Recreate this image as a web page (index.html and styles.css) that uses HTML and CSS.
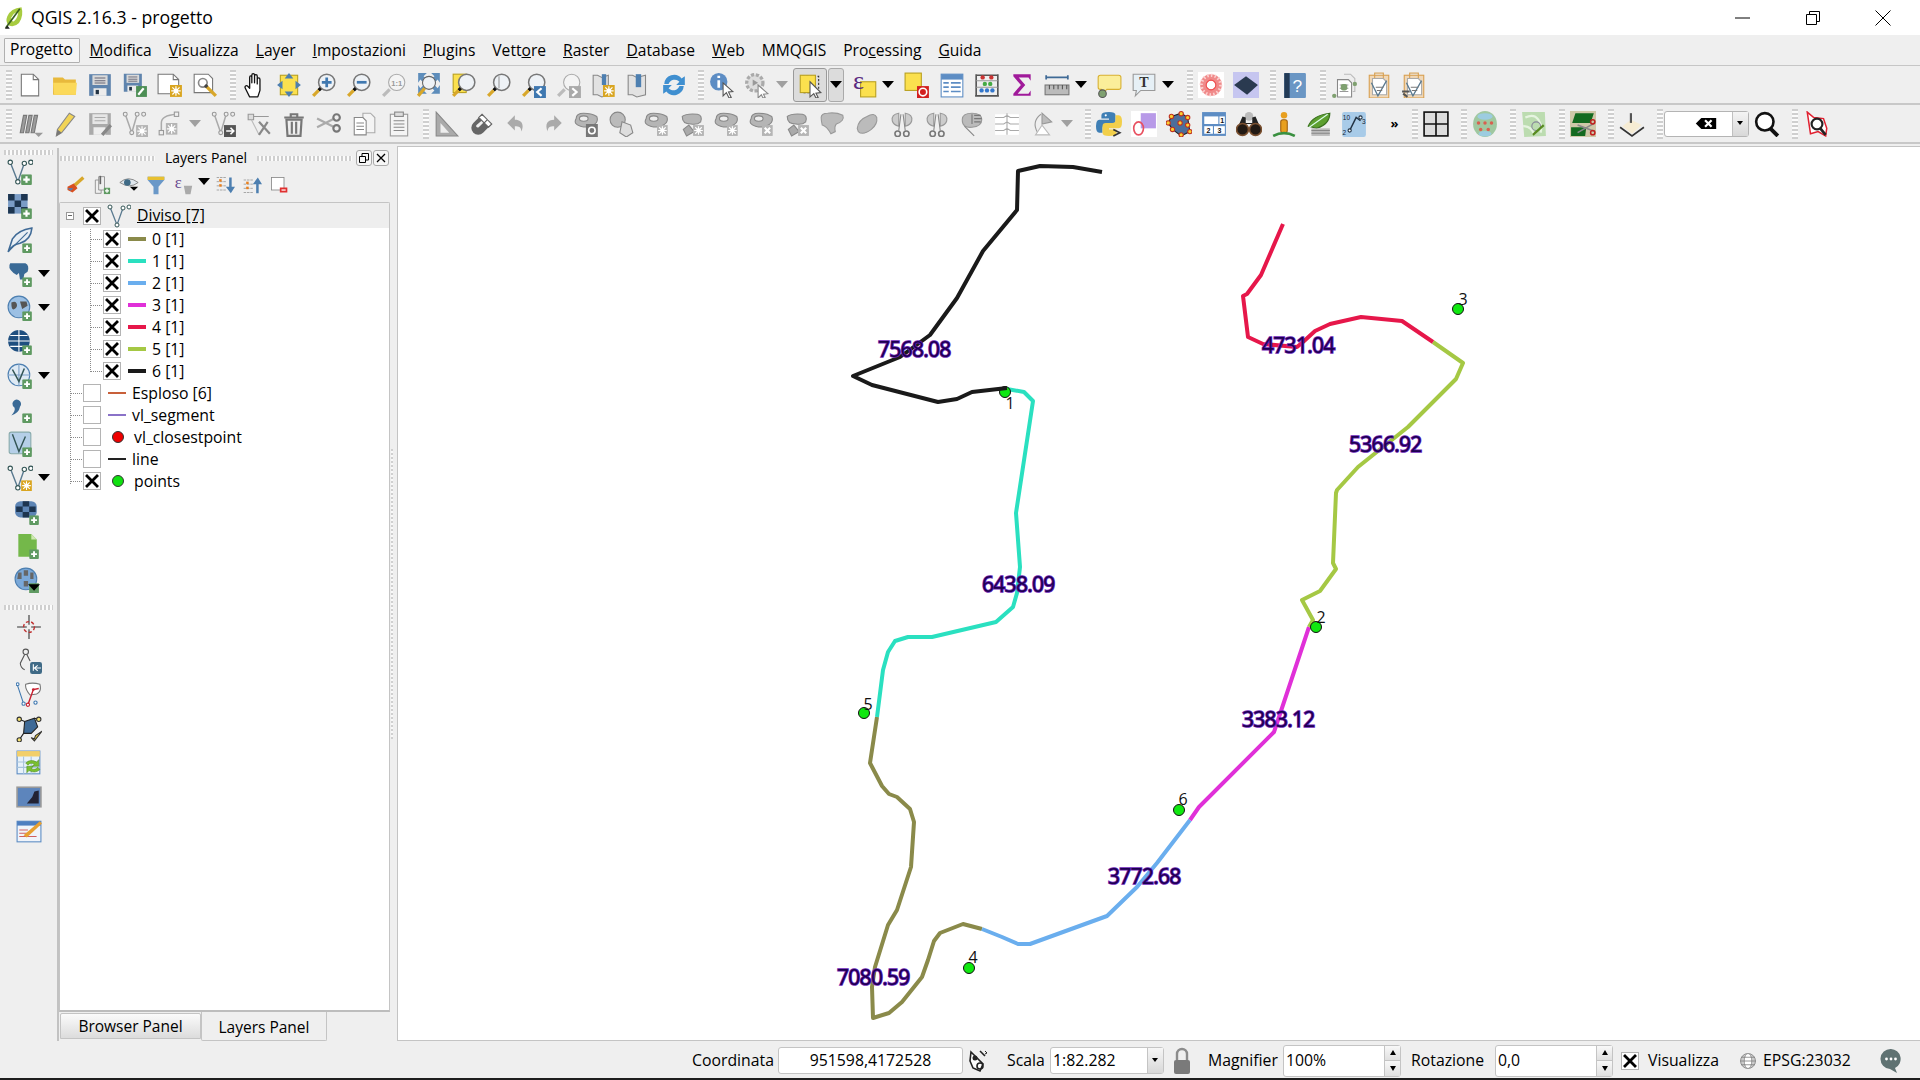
FILE: index.html
```html
<!DOCTYPE html>
<html lang="it">
<head>
<meta charset="utf-8">
<title>QGIS 2.16.3 - progetto</title>
<link rel="stylesheet" href="styles.css">
</head>
<body>
<svg class="defs" aria-hidden="true">
<defs>
<symbol id="plus" viewBox="0 0 10 10"><rect width="10" height="10" rx="1" fill="#5f9a62"/><path d="M5 2v6M2 5h6" stroke="#fff" stroke-width="2"/></symbol>
<symbol id="gear" viewBox="0 0 10 10"><rect width="10" height="10" fill="#d9a520"/><circle cx="5" cy="5" r="2" fill="#fff"/><path d="M5 1v8M1 5h8M2 2l6 6M8 2l-6 6" stroke="#fff" stroke-width="1"/></symbol>
<symbol id="ggear" viewBox="0 0 10 10"><rect width="10" height="10" fill="#b5b5b5"/><circle cx="5" cy="5" r="2" fill="#fff"/><path d="M5 1v8M1 5h8M2 2l6 6M8 2l-6 6" stroke="#fff"/></symbol>
<symbol id="gx" viewBox="0 0 10 10"><rect width="10" height="10" fill="#b5b5b5"/><path d="M2.5 2.5l5 5M7.5 2.5l-5 5" stroke="#fff" stroke-width="2"/></symbol>
<symbol id="lens" viewBox="0 0 24 24"><circle cx="14.5" cy="9.5" r="7.5" fill="#eef2f6" stroke="#777" stroke-width="1.4"/><path d="M9 15l-2 2" stroke="#111" stroke-width="3"/><path d="M7 17l-5 5" stroke="#d8a72a" stroke-width="3"/></symbol>
<symbol id="new" viewBox="0 0 24 24"><path d="M4 2h11l5 5v15H4z" fill="#fff" stroke="#777"/><path d="M15 2v5h5" fill="none" stroke="#777"/></symbol>
<symbol id="open" viewBox="0 0 24 24"><path d="M1 5h9l2 2h10v14H1z" fill="#e8b93c"/><path d="M1 10h22l-1 11H2z" fill="#fbd95a"/></symbol>
<symbol id="save" viewBox="0 0 24 24"><path d="M2 2h20v20H2z" fill="#5f84ad"/><rect x="5" y="3" width="14" height="9" fill="#d9d9d9"/><path d="M7 5.500h10M7 8h10M7 10.200h10" stroke="#667"/><rect x="6" y="15" width="12" height="7" fill="#ececec"/><rect x="8" y="16.500" width="3" height="4" fill="#234"/></symbol>
<symbol id="saveas" viewBox="0 0 24 24"><use href="#save" width="20" height="20"/><rect x="13" y="13" width="10" height="10" fill="#4d8f55"/><path d="M15 21l5-6" stroke="#fff" stroke-width="2"/></symbol>
<symbol id="newp" viewBox="0 0 24 24"><path d="M1 2h14l5 5v13H1z" fill="#fff" stroke="#777"/><path d="M15 2v5h5" fill="none" stroke="#777"/><use href="#gear" x="12" y="12" width="11" height="11"/></symbol>
<symbol id="pman" viewBox="0 0 24 24"><path d="M2 2h13l4 4v13H2z" fill="#fff" stroke="#777"/><circle cx="10" cy="10" r="4" fill="none" stroke="#888" stroke-width="1.500"/><path d="M13 13l9 9" stroke="#d8a72a" stroke-width="3"/><path d="M12 12l2 2" stroke="#444" stroke-width="3"/></symbol>
<symbol id="hand" viewBox="0 0 24 24"><path d="M8 23l-4-8c-1-2 1-3 2-2l2 2V5c0-2 2-2 2 0v5-7c0-2 2.500-2 2.500 0v7-6c0-2 2.500-2 2.500 0v7-4c0-2 2.500-2 2.500 0v10l-2 6z" fill="#fff" stroke="#111" stroke-width="1.200" stroke-linejoin="round"/></symbol>
<symbol id="pans" viewBox="0 0 24 24"><rect x="4" y="3" width="16" height="18" fill="#fbe04e" stroke="#b9a020"/><path d="M12 1l4 5h-8zM12 23l-4-5h8zM1 12l5-4v8zM23 12l-5 4V8z" fill="#4d7fb0"/></symbol>
<symbol id="zin" viewBox="0 0 24 24"><use href="#lens"/><path d="M14.500 5v9M10 9.500h9" stroke="#3f78b0" stroke-width="2.500"/></symbol>
<symbol id="zout" viewBox="0 0 24 24"><use href="#lens"/><path d="M10 9.500h9" stroke="#3f78b0" stroke-width="2.500"/></symbol>
<symbol id="z11" viewBox="0 0 24 24"><circle cx="14.500" cy="9.500" r="7.500" fill="#f4f4f4" stroke="#aaa"/><path d="M8 16l-6 6" stroke="#bbb" stroke-width="3"/><text x="14.500" y="12.500" class="svgt">1:1</text></symbol>
<symbol id="zfull" viewBox="0 0 24 24"><path d="M2 1h8L7 4l3 3-3 3-3-3-2 3zM22 1h-8l3 3-3 3 3 3 3-3 2 3zM2 20h8l-3-3 3-3-3-2-3 3-2-3zM22 20h-8l3-3-3-3 3-2 3 3 2-3z" fill="#5d8dbb"/><circle cx="12" cy="10" r="6" fill="#eef2f6" stroke="#666"/><path d="M8 15l-6 7" stroke="#d8a72a" stroke-width="3"/></symbol>
<symbol id="zsel" viewBox="0 0 24 24"><rect x="2" y="2" width="12" height="17" fill="#fbe04e" stroke="#b9a020"/><use href="#lens"/></symbol>
<symbol id="zlay" viewBox="0 0 24 24"><use href="#lens"/><path d="M12 4v11" stroke="#999"/></symbol>
<symbol id="zlast" viewBox="0 0 24 24"><use href="#lens"/><rect x="12" y="13" width="11" height="11" fill="#3f78b0"/><path d="M19 15l-4 3.500 4 3.500" fill="none" stroke="#fff" stroke-width="2"/></symbol>
<symbol id="znext" viewBox="0 0 24 24"><circle cx="14.500" cy="9.500" r="7.500" fill="#f4f4f4" stroke="#aaa"/><path d="M8 16l-6 6" stroke="#bbb" stroke-width="3"/><rect x="12" y="13" width="11" height="11" fill="#aaa"/><path d="M15 15l4 3.500-4 3.500" fill="none" stroke="#fff" stroke-width="2"/></symbol>
<symbol id="bnew" viewBox="0 0 24 24"><path d="M2 3h4l4 2 6-2v18l-6 2-4-2H2z" fill="#e2e2e2" stroke="#888"/><rect x="10" y="2" width="4" height="10" fill="#4d7fb0"/><use href="#gear" x="11" y="12" width="11" height="11"/></symbol>
<symbol id="bshow" viewBox="0 0 24 24"><path d="M2 3h4l4 2 8-2v18l-8 2-4-2H2z" fill="#e2e2e2" stroke="#888"/><rect x="9" y="2" width="5" height="12" fill="#4d7fb0"/></symbol>
<symbol id="ref" viewBox="0 0 24 24"><path d="M3 11a9 9 0 0 1 16-5l3-2v8h-8l3-3a6 6 0 0 0-10 2z" fill="#3f8fd0"/><path d="M21 13a9 9 0 0 1-16 5l-3 2v-8h8l-3 3a6 6 0 0 0 10-2z" fill="#3f8fd0"/></symbol>
<symbol id="ident" viewBox="0 0 24 24"><circle cx="9" cy="9" r="8" fill="#5d8dc4"/><path d="M9 3.500v2M9 7.500v7" stroke="#fff" stroke-width="2.500"/><path d="M13 10l9 8-4 .5 2.500 5-2 .5-2.500-5-3 3z" fill="#fff" stroke="#555"/></symbol>
<symbol id="act" viewBox="0 0 24 24"><circle cx="10" cy="10" r="7.500" fill="#ddd" stroke="#aaa" stroke-width="3" stroke-dasharray="3 1.500"/><path d="M8 7l5 3-5 3z" fill="#999"/><path d="M13 12l9 8-4 .5 1.500 3-2 .5-1.500-3-3 3z" fill="#fff" stroke="#888"/></symbol>
<symbol id="sel" viewBox="0 0 24 24"><rect x="5" y="4" width="15" height="15" fill="none" stroke="#333" stroke-dasharray="2 1.500"/><rect x="3" y="3" width="14" height="16" fill="#fbe04e" stroke="#b9a020"/><path d="M12 9l10 10-4.500.5 2 4-2 .5-2-4-3.500 3z" fill="#fff" stroke="#555"/></symbol>
<symbol id="eps" viewBox="0 0 24 24"><rect x="7" y="9" width="14" height="14" fill="#fbe04e" stroke="#b9a020"/><text x="0" y="16" class="svge">ε</text></symbol>
<symbol id="desel" viewBox="0 0 24 24"><rect x="1" y="1" width="15" height="16" fill="#fbe04e" stroke="#b9a020"/><rect x="12" y="13" width="11" height="11" fill="#d32020"/><circle cx="17.500" cy="18.500" r="3.500" fill="none" stroke="#fff" stroke-width="1.500"/></symbol>
<symbol id="attr" viewBox="0 0 24 24"><rect x="2" y="2" width="20" height="21" fill="#fff" stroke="#5d8dc4"/><rect x="2" y="2" width="20" height="5" fill="#5d8dc4"/><path d="M4 10h5M4 14h5M4 18h5M11 10h9M11 14h9M11 18h9" stroke="#5d8dc4" stroke-width="1.500"/></symbol>
<symbol id="calc" viewBox="0 0 24 24"><path d="M2 2v20M22 2v20M2 3h20M1 22h22" stroke="#555" stroke-width="1.500"/><path d="M2 8h20M2 14h20" stroke="#999"/><circle cx="8" cy="5" r="2" fill="#c33"/><circle cx="16" cy="5" r="2" fill="#c33"/><circle cx="10" cy="11" r="2" fill="#4a4"/><circle cx="15" cy="11" r="2" fill="#4a4"/><circle cx="7" cy="17" r="2" fill="#37c"/><circle cx="12" cy="17" r="2" fill="#37c"/><circle cx="17" cy="17" r="2" fill="#37c"/></symbol>
<symbol id="sum" viewBox="0 0 24 24"><path d="M4 2h16v6l-2-3H9l6 7-7 8h10l2-3v5H4v-2l7-8-7-8z" fill="#a01a9a"/></symbol>
<symbol id="meas" viewBox="0 0 24 24"><path d="M2 5h20M2 3v4M22 3v4" stroke="#3f6a96" stroke-width="1.600"/><rect x="1" y="12" width="22" height="9" fill="#bbb" stroke="#777"/><path d="M5 12v4M9 12v4M13 12v4M17 12v4M21 12v4" stroke="#555"/></symbol>
<symbol id="tip" viewBox="0 0 24 24"><path d="M4 3h17q2 0 2 2v9q0 2-2 2H10l-3 3-2-3H4q-2 0-2-2V5q0-2 2-2z" fill="#fbee9a" stroke="#d8b030"/><ellipse cx="6" cy="20" rx="3.500" ry="3.500" fill="#7fa070" stroke="#555"/></symbol>
<symbol id="tann" viewBox="0 0 24 24"><path d="M2 2h20v15H9l-5 5 1-5H2z" fill="#e6f0f6" stroke="#999"/><text x="12" y="14" class="svgT">T</text></symbol>
<symbol id="pink" viewBox="0 0 24 24"><rect width="24" height="24" fill="#fff"/><circle cx="12" cy="12" r="10" fill="#f08a8a"/><circle cx="12" cy="12" r="9" fill="none" stroke="#fbd0d0" stroke-dasharray="1.500 2" stroke-width="3"/><circle cx="12" cy="12" r="4" fill="#fff"/><circle cx="12" cy="12" r="4.500" fill="none" stroke="#ef5050"/></symbol>
<symbol id="dark" viewBox="0 0 24 24"><rect width="24" height="24" fill="#c6c6f0"/><path d="M12 4l11 8-10 9L1 12z" fill="#2a3a50"/></symbol>
<symbol id="help" viewBox="0 0 24 24"><rect x="3" y="1" width="20" height="23" rx="1" fill="#6a96c4"/><rect x="3" y="1" width="5" height="23" fill="#223a55"/><text x="15" y="18" class="svgq">?</text></symbol>
<symbol id="clipdoc" viewBox="0 0 24 24"><path d="M12 2h6l4 4v12h-2" fill="#eee" stroke="#bbb"/><path d="M6 7h10l3 3v13H6z" fill="#fff" stroke="#888"/><path d="M8 12h8M8 15h8M8 18h8" stroke="#999"/><circle cx="3" cy="22" r="2" fill="#7fa070"/><circle cx="22" cy="11" r="2" fill="#7fa070"/><rect x="9" y="11" width="6" height="6" rx="2" fill="#7fa070"/></symbol>
<symbol id="clipv" viewBox="0 0 24 24"><rect x="3" y="3" width="18" height="21" fill="#f0d8b8" stroke="#d8a050"/><rect x="8" y="1" width="8" height="5" fill="none" stroke="#d8a050"/><path d="M6 6h10l3 3v12H6z" fill="#fff" stroke="#aaa"/><path d="M5 10l6 12 8-14" fill="none" stroke="#5a7a90" stroke-width="1.200"/><path d="M9 14h7M10 17h5" stroke="#777"/></symbol>
<symbol id="clipv2" viewBox="0 0 24 24"><use href="#clipv"/><path d="M1 18h7M2 20l4 3" stroke="#555" stroke-width="2"/></symbol>
<symbol id="edits" viewBox="0 0 24 24"><path d="M3 20l3-16 3 0-3 16zM8 20l3-16 3 0-3 16zM13 20l3-16 3 0-3 16z" fill="#9c9c9c" stroke="#777"/><path d="M16 20h8l-4 4z" fill="#999"/></symbol>
<symbol id="pencil" viewBox="0 0 24 24"><path d="M16 2l5 3L9 20l-5 3 1-6z" fill="#f2d456" stroke="#888"/><path d="M4 23l1-6 4 3z" fill="#777"/></symbol>
<symbol id="gsave" viewBox="0 0 24 24"><path d="M2 2h20v20H2z" fill="#aaa"/><rect x="5" y="3" width="14" height="9" fill="#e6e6e6"/><path d="M7 6h10M7 9h10" stroke="#aaa"/><rect x="6" y="15" width="11" height="7" fill="#eee"/><path d="M14 22l8-9" stroke="#888" stroke-width="3"/></symbol>
<symbol id="gv" viewBox="0 0 24 24"><path d="M3 3l6 17 5-17" fill="none" stroke="#aaa" stroke-width="1.400"/><circle cx="3" cy="3" r="1.800" fill="#eee" stroke="#999"/><circle cx="9" cy="20" r="1.800" fill="#eee" stroke="#999"/><circle cx="14" cy="3" r="1.800" fill="#eee" stroke="#999"/><circle cx="20" cy="3" r="1.800" fill="#eee" stroke="#999"/></symbol>
<symbol id="gadd" viewBox="0 0 24 24"><use href="#gv"/><use href="#ggear" x="13" y="13" width="11" height="11"/></symbol>
<symbol id="garc" viewBox="0 0 24 24"><path d="M4 20V11Q4 4 18 3" fill="none" stroke="#aaa" stroke-width="1.400"/><rect x="2" y="18" width="4" height="4" fill="#eee" stroke="#999"/><rect x="16" y="1" width="4" height="4" fill="#eee" stroke="#999"/><use href="#ggear" x="8" y="11" width="11" height="11"/></symbol>
<symbol id="gmove" viewBox="0 0 24 24"><use href="#gv"/><rect x="12" y="13" width="11" height="11" fill="#555"/><path d="M14 18.500h7M18 15.500l3 3-3 3" fill="none" stroke="#fff" stroke-width="1.500"/></symbol>
<symbol id="gnode" viewBox="0 0 24 24"><path d="M2 3h5v5H2zM7 5h14" fill="#ddd" stroke="#999"/><path d="M5 8l7 14" stroke="#bbb"/><path d="M20 10l-8 12M12 10l10 11" stroke="#888" stroke-width="2"/></symbol>
<symbol id="trash" viewBox="0 0 24 24"><path d="M3 6h18M9 6V3h6v3" fill="none" stroke="#777" stroke-width="2"/><path d="M5 8h14l-1 15H6z" fill="none" stroke="#777" stroke-width="2"/><path d="M10 10v11M14 10v11" stroke="#777" stroke-width="2"/></symbol>
<symbol id="cut" viewBox="0 0 24 24"><path d="M1 7l16 8M1 15l16-8" stroke="#aaa" stroke-width="2"/><circle cx="19" cy="6" r="3" fill="none" stroke="#777" stroke-width="2"/><circle cx="19" cy="16" r="3" fill="none" stroke="#777" stroke-width="2"/></symbol>
<symbol id="copy" viewBox="0 0 24 24"><path d="M11 2h7l4 4v14H11z" fill="#f4f4f4" stroke="#aaa"/><path d="M3 6h8l3 3v13H3z" fill="#fff" stroke="#888"/><path d="M5 11h7M5 14h7M5 17h7" stroke="#888"/></symbol>
<symbol id="paste" viewBox="0 0 24 24"><rect x="4" y="3" width="16" height="20" fill="#f4f4f4" stroke="#999"/><rect x="8" y="1" width="8" height="4" fill="#ddd" stroke="#888"/><path d="M7 9h10M7 12h10M7 15h10M7 18h10" stroke="#888"/></symbol>
<symbol id="tri" viewBox="0 0 24 24"><path d="M2 1l20 22H2z" fill="#aaa" stroke="#888"/><path d="M6 11l8 9H6z" fill="#eee"/></symbol>
<symbol id="magnet" viewBox="0 0 24 24"><path d="M12 3l-8 8a6 6 0 0 0 9 9l8-8-5-4-7 7c-2 1-3-1-2-2l7-6z" fill="#666"/><path d="M12 3l5 5-3 3-5-5zM21 12l-3 3-4-4 3-3z" fill="#fff" stroke="#666"/></symbol>
<symbol id="undo" viewBox="0 0 24 24"><path d="M10 4L3 11l7 7v-4c4 0 6 1 6 5 3-7 0-11-6-11z" fill="#aaa"/></symbol>
<symbol id="redo" viewBox="0 0 24 24"><path d="M14 4l7 7-7 7v-4c-4 0-6 1-6 5-3-7 0-11 6-11z" fill="#aaa"/></symbol>
<symbol id="blob" viewBox="0 0 24 24"><path d="M2 7q0-5 7-5t12 3q2 5-3 8t-12 1T2 7z" fill="#b5b5b5" stroke="#888"/><ellipse cx="9" cy="7" rx="4" ry="2.500" fill="#eee" stroke="#888"/></symbol>
<symbol id="ring" viewBox="0 0 24 24"><use href="#blob"/><rect x="11" y="12" width="11" height="12" fill="#777"/><circle cx="16.500" cy="18" r="3" fill="none" stroke="#fff" stroke-width="1.500"/></symbol>
<symbol id="part" viewBox="0 0 24 24"><circle cx="8" cy="8" r="7" fill="#bbb" stroke="#888"/><path d="M12 10l8 3 2 7-6 4-6-4z" fill="#ddd" stroke="#888"/></symbol>
<symbol id="bg1" viewBox="0 0 24 24"><use href="#blob"/><use href="#ggear" x="12" y="13" width="10" height="10"/></symbol>
<symbol id="bg2" viewBox="0 0 24 24"><path d="M3 5q4-3 14-2 5 1 3 7-3 3-9 2-8 0-8-7z" fill="#b5b5b5" stroke="#888"/><path d="M9 13l-5 4 3 6 7-4z" fill="#aaa" stroke="#888"/><use href="#ggear" x="13" y="13" width="10" height="10"/></symbol>
<symbol id="bx1" viewBox="0 0 24 24"><use href="#blob"/><use href="#gx" x="12" y="13" width="10" height="10"/></symbol>
<symbol id="bx2" viewBox="0 0 24 24"><path d="M3 5q4-3 14-2 5 1 3 7-3 3-9 2-8 0-8-7z" fill="#b5b5b5" stroke="#888"/><path d="M9 13l-5 4 3 6 7-4z" fill="#aaa" stroke="#888"/><use href="#gx" x="13" y="13" width="10" height="10"/></symbol>
<symbol id="rsh" viewBox="0 0 24 24"><path d="M2 6q0-4 6-4 8-1 14 2 2 5-6 8-2 2-1 7l-4 2Q7 14 3 13 2 9 2 6z" fill="#bbb" stroke="#999"/></symbol>
<symbol id="simp" viewBox="0 0 24 24"><path d="M3 16Q4 8 12 5q7-4 9 1 1 6-5 11-8 6-12 2z" fill="#bbb" stroke="#999"/></symbol>
<symbol id="sc1" viewBox="0 0 24 24"><path d="M9 2Q2 3 3 9q1 4 6 5zM15 2q7 1 6 7-1 4-6 5z" fill="#ccc" stroke="#999"/><path d="M11 3l-2 15M13 3l2 15" stroke="#888"/><circle cx="8" cy="21" r="2.500" fill="none" stroke="#777" stroke-width="1.500"/><circle cx="16" cy="21" r="2.500" fill="none" stroke="#777" stroke-width="1.500"/></symbol>
<symbol id="mrg" viewBox="0 0 24 24"><path d="M3 8q0-6 9-6t9 6-9 7-9-7z" fill="#bbb" stroke="#999"/><path d="M12 3v9M14 4h6M14 7h7M14 10h6" stroke="#777"/><path d="M5 14l9 9" stroke="#888"/></symbol>
<symbol id="off" viewBox="0 0 24 24"><rect x="1" y="3" width="22" height="19" fill="#fff"/><path d="M1 6h8l3-2 3 2h8M1 12h8l3-2 3 2h8M1 18h8l3-2 3 2h8M12 2v20" fill="none" stroke="#aaa"/></symbol>
<symbol id="rot" viewBox="0 0 24 24"><path d="M11 3Q2 10 8 20" fill="none" stroke="#999"/><path d="M12 2l9 8-9 2z" fill="#bbb" stroke="#999"/><path d="M12 13l7 9H6z" fill="#fff" stroke="#bbb"/></symbol>
<symbol id="py" viewBox="0 0 24 24"><path d="M12 1q-7 0-7 3v3h7v1H3q-3 0-3 6t3 6h3v-4q0-3 3-3h6q3 0 3-3V4q0-3-6-3z" fill="#3f7fb5"/><path d="M12 23q7 0 7-3v-3h-7v-1h9q3 0 3-6t-3-6h-3v4q0 3-3 3H9q-3 0-3 3v6q0 3 6 3z" fill="#f2cf4a"/><circle cx="9" cy="4" r="1" fill="#fff"/><path d="M16 17l6 3-6 3" fill="none" stroke="#333" stroke-width="1.500"/></symbol>
<symbol id="gcirc" viewBox="0 0 24 24"><rect width="24" height="24" fill="#fff"/><rect x="9" y="2" width="14" height="14" fill="#b89ae8"/><ellipse cx="7" cy="16" rx="4.500" ry="6" fill="none" stroke="#e85060" stroke-width="1.500"/></symbol>
<symbol id="poly" viewBox="0 0 24 24"><path d="M5 5l9-3 6 4 2 13-8 4-8-6-4-6z" fill="#4d6e9a" stroke="#222"/><g fill="#fbd030" stroke="#c03020"><circle cx="5" cy="5" r="2"/><circle cx="14" cy="2.500" r="2"/><circle cx="20" cy="6" r="2"/><circle cx="22" cy="19" r="2"/><circle cx="14" cy="22" r="2"/><circle cx="6" cy="17" r="2"/><circle cx="2" cy="11" r="2"/><circle cx="13" cy="11" r="2"/><circle cx="20" cy="13" r="2"/></g></symbol>
<symbol id="tbl" viewBox="0 0 24 24"><rect x="1" y="1" width="22" height="22" fill="#5d8dc4"/><rect x="3" y="5" width="13" height="7" fill="#fff"/><rect x="17" y="5" width="5" height="7" fill="#fff"/><rect x="3" y="14" width="8" height="7" fill="#fff"/><rect x="12" y="14" width="10" height="7" fill="#fff"/><text x="19.500" y="11" class="svgn">1</text><text x="7" y="20" class="svgn">2</text><text x="17" y="20" class="svgn">3</text></symbol>
<symbol id="bino" viewBox="0 0 24 24"><circle cx="12" cy="5" r="4" fill="#bbb"/><path d="M3 12l3-7 3 1v5h6V6l3-1 3 7" fill="#222"/><circle cx="6" cy="17" r="5.500" fill="#221a14" stroke="#7a5030" stroke-width="1.500"/><circle cx="18" cy="17" r="5.500" fill="#221a14" stroke="#7a5030" stroke-width="1.500"/></symbol>
<symbol id="person" viewBox="0 0 24 24"><circle cx="12" cy="4" r="3" fill="#e8a020"/><rect x="9" y="8" width="6" height="12" rx="2" fill="#e8a020" stroke="#a06010"/><path d="M2 23q10-5 20 0" fill="none" stroke="#3a9040" stroke-width="2.500"/></symbol>
<symbol id="leaf" viewBox="0 0 24 24"><path d="M2 14Q6 4 22 2q0 10-12 14z" fill="#5da030" stroke="#3a7020"/><path d="M3 15l17-12" stroke="#dfe" /><rect x="5" y="16" width="17" height="7" fill="#bbb"/><path d="M5 18h17M5 20.500h17" stroke="#888"/></symbol>
<symbol id="numv" viewBox="0 0 24 24"><rect x="1" y="1" width="22" height="23" rx="2" fill="#a8cbe8"/><path d="M8 18l6-12 4 3" fill="none" stroke="#234" stroke-width="1.400"/><circle cx="8" cy="18" r="1.500" fill="#fff" stroke="#234"/><circle cx="18" cy="6" r="1.500" fill="#fff" stroke="#234"/><text x="5" y="8" class="svgs">10</text><text x="3" y="22" class="svgs">2</text><text x="21" y="12" class="svgs">3</text></symbol>
<symbol id="grid4" viewBox="0 0 24 24"><rect x="1" y="1" width="22" height="22" fill="#ddd" stroke="#111" stroke-width="1.500"/><path d="M12 1v22M1 12h22" stroke="#111" stroke-width="1.500"/></symbol>
<symbol id="globe3" viewBox="0 0 24 24"><ellipse cx="12" cy="12" rx="11" ry="12" fill="#a0c8a0"/><ellipse cx="12" cy="5" rx="7" ry="3" fill="#9ccce0"/><g fill="#d86050"><circle cx="6" cy="11" r="1.600"/><circle cx="12" cy="11" r="1.600"/><circle cx="18" cy="11" r="1.600"/><circle cx="8" cy="17" r="1.600"/><circle cx="15" cy="17" r="1.600"/></g><ellipse cx="12" cy="21" rx="6" ry="2.500" fill="#9ccce0"/></symbol>
<symbol id="tmap" viewBox="0 0 24 24"><path d="M1 1h21l1 22-20 1z" fill="#bcdcb0"/><path d="M4 6q8-4 12 2t2 12M2 14q8 0 10 8" fill="none" stroke="#e6f4e0" stroke-width="2"/><circle cx="14" cy="14" r="4" fill="none" stroke="#889"/><path d="M11 22l10-9" stroke="#588a20" stroke-width="2"/></symbol>
<symbol id="cutm" viewBox="0 0 24 24"><rect width="24" height="24" fill="#cfc8a8"/><path d="M5 2h17l-3 9H2zM1 15h14l-1 8H1z" fill="#146a20"/><path d="M7 13l16 6M7 20l16-9" stroke="#888" stroke-width="1.500"/><circle cx="21" cy="10" r="2" fill="none" stroke="#c02020" stroke-width="1.400"/><circle cx="21" cy="20" r="2" fill="none" stroke="#c02020" stroke-width="1.400"/></symbol>
<symbol id="wpt" viewBox="0 0 24 24"><path d="M3 14l8-6 10 5-9 8z" fill="#f6ecd4"/><path d="M1 15l11 8 11-8" fill="none" stroke="#333" stroke-width="1.500"/><path d="M11 2v9" stroke="#555" stroke-width="2"/></symbol>
<symbol id="back" viewBox="0 0 24 14"><path d="M7 1h16v12H7L1 7z" fill="#000"/><path d="M11 3.500l7 7M18 3.500l-7 7" stroke="#fff" stroke-width="2.400"/></symbol>
<symbol id="bigmag" viewBox="0 0 24 24"><circle cx="10" cy="10" r="8" fill="#fff" stroke="#111" stroke-width="2.400"/><path d="M15 16l7 7" stroke="#111" stroke-width="3.600"/></symbol>
<symbol id="redpoly" viewBox="0 0 24 24"><path d="M3 1l6 5 9 1 3 9-1 7-7-4-7 2z" fill="#fff" stroke="#e02030" stroke-width="1.400"/><circle cx="12" cy="12" r="5" fill="none" stroke="#222" stroke-width="2"/><path d="M15 16l5 6" stroke="#222" stroke-width="2.500"/></symbol>
<symbol id="V" viewBox="0 0 24 24"><path d="M3 3l7 18 6-17" fill="none" stroke="#5a7a90" stroke-width="1.300"/><circle cx="3" cy="3" r="2" fill="#fff" stroke="#355"/><circle cx="10" cy="21" r="2" fill="#fff" stroke="#355"/><circle cx="16" cy="4" r="2" fill="#fff" stroke="#355"/><circle cx="22" cy="3" r="2" fill="#fff" stroke="#355"/></symbol>
<symbol id="lv" viewBox="0 0 24 24"><use href="#V"/><use href="#plus" x="13" y="14" width="10" height="10"/></symbol>
<symbol id="lr" viewBox="0 0 24 24"><rect x="1" y="1" width="18" height="18" fill="#7a9cc6"/><path d="M1 1h6v6H1zM13 1h6v6h-6zM7 7h6v6H7zM1 13h6v6H1zM13 13h6v6h-6z" fill="#1d3550"/><use href="#plus" x="13" y="14" width="10" height="10"/></symbol>
<symbol id="lf" viewBox="0 0 24 24"><path d="M1 23L5 11Q10 3 23 1 22 12 12 15 5 16 1 23z" fill="#e8eef4" stroke="#3f6a96" stroke-width="1.400"/><path d="M1 23L19 5" stroke="#3f6a96"/><use href="#plus" x="14" y="15" width="9" height="9"/></symbol>
<symbol id="lp" viewBox="0 0 24 24"><path d="M3 2h14q4 2 2 8l-3 2-1 5h-3l-1-6-2 2-3-2Q0 6 3 2z" fill="#3a6a96"/><use href="#plus" x="14" y="15" width="9" height="9"/></symbol>
<symbol id="lw" viewBox="0 0 24 24"><circle cx="11" cy="11" r="10" fill="#9cc0e4" stroke="#4d7fb0"/><path d="M4 7q4-2 5 1t-2 5-3-6zM12 6l6 0 1 4-5 3z" fill="#555"/><use href="#plus" x="14" y="15" width="9" height="9"/></symbol>
<symbol id="lg" viewBox="0 0 24 24"><circle cx="11" cy="11" r="10" fill="#1f4f80"/><path d="M1 11h20M11 1v20M3 6h16M3 16h16" stroke="#fff"/><use href="#plus" x="14" y="15" width="9" height="9"/></symbol>
<symbol id="lwv" viewBox="0 0 24 24"><circle cx="11" cy="11" r="10" fill="#dfeaf4" stroke="#4d7fb0"/><path d="M1 11h20M11 1v20" stroke="#7aa0c8"/><path d="M5 6l6 11 5-12" fill="none" stroke="#355" stroke-width="1.400"/><use href="#plus" x="14" y="15" width="9" height="9"/></symbol>
<symbol id="lc" viewBox="0 0 24 24"><path d="M5 6a4 4 0 1 1 7 3q-1 6-8 8 4-4 3-7-2-1-2-4z" fill="#3a6a96"/><use href="#plus" x="14" y="15" width="9" height="9"/></symbol>
<symbol id="ls" viewBox="0 0 24 24"><rect x="2" y="1" width="20" height="20" rx="2" fill="#b5cfe8" stroke="#8aa"/><path d="M5 3l6 16 6-14" fill="none" stroke="#355" stroke-width="1.300"/><use href="#plus" x="14" y="15" width="9" height="9"/></symbol>
<symbol id="lnew" viewBox="0 0 24 24"><use href="#V"/><use href="#gear" x="13" y="14" width="10" height="10"/></symbol>
<symbol id="lwc" viewBox="0 0 24 24"><rect x="1" y="2" width="20" height="15" rx="5" fill="#5d85b5"/><path d="M8 2h6v5H8zM2 7h6v5H2zM14 7h6v5h-6zM8 12h6v5H8z" fill="#1d3550"/><use href="#plus" x="14" y="15" width="9" height="9"/></symbol>
<symbol id="lnf" viewBox="0 0 24 24"><path d="M4 1h12l5 5v16H4z" fill="#74b84a"/><path d="M16 1v5h5z" fill="#cde8b0"/><use href="#plus" x="14" y="15" width="9" height="9"/></symbol>
<symbol id="lwd" viewBox="0 0 24 24"><circle cx="11" cy="11" r="10" fill="#7aa8d8" stroke="#4d7fb0"/><path d="M4 5h3v6H3zM9 3h4v5H9zM15 5h3v6h-3zM9 13h4v5H9z" fill="#666"/><rect x="14" y="15" width="9" height="9" fill="#5f9a62"/><path d="M13 16h11l-5.500 6z" fill="#000"/></symbol>
<symbol id="aim" viewBox="0 0 24 24"><path d="M12 1v9M12 14v9M1 12h9M14 12h9" stroke="#333"/><circle cx="12" cy="12" r="5" fill="none" stroke="#c03030" stroke-width="1.300" stroke-dasharray="3 2"/></symbol>
<symbol id="comp" viewBox="0 0 24 24"><circle cx="9" cy="3.500" r="2.500" fill="none" stroke="#555"/><path d="M8 6L4 14q0 4 4 6M10 6l3 6" fill="none" stroke="#555"/><rect x="13" y="13" width="11" height="11" rx="2" fill="#3f6a86"/><path d="M16 15v6M23 18.500h-5M20 16l-3 2.500 3 2.500" fill="none" stroke="#fff"/></symbol>
<symbol id="tops" viewBox="0 0 24 24"><path d="M1 2l6 18" stroke="#3f78b0"/><circle cx="7" cy="20" r="1.500" fill="#fff" stroke="#3f78b0"/><circle cx="1.500" cy="2" r="1.300" fill="#fff" stroke="#3f78b0"/><path d="M9 2q6-2 13 0 2 7-3 9l-6 1Q8 6 9 2z" fill="#fff" stroke="#777"/><path d="M11 21l5-14 5-1" fill="none" stroke="#c82030" stroke-width="1.300"/><circle cx="16" cy="7" r="1.300" fill="#c82030"/><circle cx="11" cy="21" r="1.500" fill="#fff" stroke="#c82030"/><circle cx="18" cy="19" r="1.500" fill="#fff" stroke="#3f78b0"/></symbol>
<symbol id="topc" viewBox="0 0 24 24"><path d="M8 5l9-3 3 8-6 6H7z" fill="#3f6a96" stroke="#222"/><path d="M3 3l5 2M21 3l-4-1M3 22l4-6" stroke="#222"/><circle cx="3" cy="3" r="2" fill="#f2e070" stroke="#333"/><circle cx="21" cy="3" r="2" fill="#f2e070" stroke="#333"/><circle cx="3" cy="22" r="2" fill="#f2e070" stroke="#333"/><path d="M14 20l3 3 7-9-6 4-1 3z" fill="#f2d040" stroke="#333"/></symbol>
<symbol id="tref" viewBox="0 0 24 24"><rect x="1" y="1" width="21" height="21" fill="#e8f2fa" stroke="#5d8dc4"/><rect x="1" y="1" width="21" height="5" fill="#f2cf6a"/><path d="M1 11h21M1 16h21M7 6v16M14 6v16" stroke="#a8c4dc"/><path d="M9 12q4-4 10-1l2-2v6h-6l2-2q-4-2-6 1zM22 18q-4 4-10 1l-2 2v-6h6l-2 2q4 2 6-1z" fill="#7ac030" stroke="#4d8820" stroke-width=".5"/></symbol>
<symbol id="tpic" viewBox="0 0 24 20"><rect x="1" y="1" width="22" height="18" fill="#5d85bc" stroke="#999" stroke-width="1.500"/><path d="M10 16l5-6 2-5 4-1v12z" fill="#223"/></symbol>
<symbol id="tedit" viewBox="0 0 24 22"><rect x="1" y="2" width="22" height="19" fill="#f0f4fa" stroke="#5d8dc4"/><rect x="1" y="2" width="22" height="4" fill="#4d7fc0"/><path d="M3 10h8M3 13h8M3 16h16" stroke="#d06060"/><path d="M7 15L22 2l2 2-14 13z" fill="#e8a030"/></symbol>
<symbol id="eye" viewBox="0 0 24 24"><path d="M1 9q10-9 22 0-10 8-22 0z" fill="#dfe6ec" stroke="#777"/><circle cx="10" cy="9" r="4" fill="#3f6a86"/><path d="M13 14h10l-5 5z" fill="#000"/></symbol>
<symbol id="paint" viewBox="0 0 24 24"><path d="M3 14l8-4 4 6-6 5-6-3z" fill="#d85020"/><path d="M3 16l4 3 3-3" fill="#4a80c0"/><path d="M12 12L22 3" stroke="#d8a72a" stroke-width="4"/></symbol>
<symbol id="addg" viewBox="0 0 24 24"><path d="M4 6h7v16H4z" fill="none" stroke="#888"/><path d="M8 2h7v16H8z" fill="#eee" stroke="#888"/><path d="M10 1v10" stroke="#666" stroke-width="2"/><use href="#plus" x="14" y="15" width="8" height="8"/></symbol>
<symbol id="funnel" viewBox="0 0 24 24"><path d="M2 2h20v4l-7 8v9h-6v-9L2 6z" fill="#6a98c8"/><rect x="2" y="2" width="20" height="4" fill="#e8c030"/></symbol>
<symbol id="epsg" viewBox="0 0 24 24"><text x="2" y="15" class="svge2">ε</text><path d="M13 13h10l-2 10h-6z" fill="#aaa"/></symbol>
<symbol id="expand" viewBox="0 0 24 24"><path d="M2 3h12M2 8h12M2 13h12M2 18h12" stroke="#999" stroke-dasharray="3 1"/><rect x="5" y="5" width="3" height="3" fill="#e88020"/><rect x="5" y="11" width="3" height="3" fill="#e88020"/><path d="M17 3v11h-4l6 8 5-8h-4V3z" fill="#4d7fb0"/></symbol>
<symbol id="collapse" viewBox="0 0 24 24"><path d="M2 6h12M2 11h12M2 16h12M2 21h12" stroke="#999" stroke-dasharray="3 1"/><rect x="5" y="8" width="3" height="3" fill="#e88020"/><rect x="5" y="14" width="3" height="3" fill="#e88020"/><path d="M17 22V11h-4l6-8 5 8h-4v11z" fill="#4d7fb0"/></symbol>
<symbol id="rem" viewBox="0 0 24 24"><rect x="3" y="3" width="15" height="15" fill="#fff" stroke="#888"/><rect x="13" y="15" width="9" height="6" fill="#e03030"/><rect x="15" y="17.300" width="5" height="1.500" fill="#fff"/></symbol>
<symbol id="x" viewBox="0 0 18 18"><path d="M4 4l10 10M14 4L4 14" stroke="#000" stroke-width="2.800" stroke-linecap="square"/></symbol>
<symbol id="logo" viewBox="0 0 24 28"><path d="M4 12Q8 2 21 1q3 10-3 19-6 6-12 3Q1 19 4 12z" fill="#a8cc40"/><path d="M9 13q3-5 8-7 0 8-5 12-3 1-3-5z" fill="#fff"/><path d="M2 26L19 3" stroke="#3a6020" stroke-width="2"/><path d="M4 23l3 4-6 0z" fill="#222"/></symbol>
<symbol id="ren" viewBox="0 0 24 24"><path d="M5 3l12 12-3 7-7-3-3-7zM14 2l5 5" fill="#fff" stroke="#222" stroke-width="1.600"/><circle cx="9" cy="9" r="2.500" fill="#222"/><circle cx="14" cy="17" r="3" fill="none" stroke="#222" stroke-width="1.600"/><path d="M19 2l2 2-2 1" stroke="#222" fill="none"/></symbol>
<symbol id="lock" viewBox="0 0 18 28"><path d="M4 13V7a5 5 0 0 1 10 0v6" fill="none" stroke="#8c8c8c" stroke-width="2.400"/><rect x="1" y="13" width="16" height="14" rx="2" fill="#7a7a7a"/></symbol>
<symbol id="proj" viewBox="0 0 24 24"><circle cx="12" cy="12" r="10" fill="#ccc" stroke="#777"/><ellipse cx="12" cy="12" rx="5" ry="10" fill="#fff" stroke="#888"/><path d="M2 12h20M3 7h18M3 17h18" stroke="#777"/></symbol>
<symbol id="msg" viewBox="0 0 22 26"><path d="M11 1a10 10 0 0 1 4 19l2 5-7-4A10 10 0 0 1 11 1z" fill="#5f7272"/><circle cx="6.500" cy="11" r="1.400" fill="#fff"/><circle cx="11" cy="11" r="1.400" fill="#fff"/><circle cx="15.500" cy="11" r="1.400" fill="#fff"/></symbol>
</defs>
</svg>

<header class="title">
  <svg class="logo"><use href="#logo"/></svg>
  <span class="title-text">QGIS 2.16.3 - progetto</span>
  <div class="win">
    <svg class="win-i" viewBox="0 0 16 16"><path d="M0 8h15" stroke="#000"/></svg>
    <svg class="win-i" viewBox="0 0 16 16"><path d="M1.500 4.500h10v10h-10zM4.500 4V1.500h10v10H12" fill="none" stroke="#000"/></svg>
    <svg class="win-i" viewBox="0 0 16 16"><path d="M.5.500l15 15M15.500.500l-15 15" stroke="#000"/></svg>
  </div>
</header>

<nav class="menu">
  <span class="mi mi-on">Pro<u>g</u>etto</span><span class="mi"><u>M</u>odifica</span><span class="mi"><u>V</u>isualizza</span><span class="mi"><u>L</u>ayer</span><span class="mi"><u>I</u>mpostazioni</span><span class="mi"><u>P</u>lugins</span><span class="mi">Vett<u>o</u>re</span><span class="mi"><u>R</u>aster</span><span class="mi"><u>D</u>atabase</span><span class="mi"><u>W</u>eb</span><span class="mi">MMQGIS</span><span class="mi">Pro<u>c</u>essing</span><span class="mi"><u>G</u>uida</span>
</nav>

<div class="tb">
  <i class="grip first"></i>
  <b class="ic"><svg><use href="#new"/></svg></b><b class="ic"><svg><use href="#open"/></svg></b><b class="ic"><svg><use href="#save"/></svg></b><b class="ic"><svg><use href="#saveas"/></svg></b><b class="ic"><svg><use href="#newp"/></svg></b><b class="ic"><svg><use href="#pman"/></svg></b>
  <i class="grip"></i>
  <b class="ic"><svg><use href="#hand"/></svg></b><b class="ic"><svg><use href="#pans"/></svg></b><b class="ic"><svg><use href="#zin"/></svg></b><b class="ic"><svg><use href="#zout"/></svg></b><b class="ic"><svg><use href="#z11"/></svg></b><b class="ic"><svg><use href="#zfull"/></svg></b><b class="ic"><svg><use href="#zsel"/></svg></b><b class="ic"><svg><use href="#zlay"/></svg></b><b class="ic"><svg><use href="#zlast"/></svg></b><b class="ic"><svg><use href="#znext"/></svg></b><b class="ic"><svg><use href="#bnew"/></svg></b><b class="ic"><svg><use href="#bshow"/></svg></b><b class="ic"><svg><use href="#ref"/></svg></b>
  <i class="grip g7"></i>
  <b class="ic"><svg><use href="#ident"/></svg></b><b class="ic"><svg><use href="#act"/></svg></b><span class="dd dd-grey"></span>
  <b class="ic ic-on"><svg><use href="#sel"/></svg></b><span class="dd-on"><span class="dd"></span></span>
  <b class="ic ml4"><svg><use href="#eps"/></svg></b><span class="dd dd-n"></span>
  <b class="ic ml6"><svg><use href="#desel"/></svg></b><b class="ic"><svg><use href="#attr"/></svg></b><b class="ic"><svg><use href="#calc"/></svg></b><b class="ic"><svg><use href="#sum"/></svg></b><b class="ic"><svg><use href="#meas"/></svg></b><span class="dd dd-m"></span>
  <b class="ic ml3"><svg><use href="#tip"/></svg></b><b class="ic"><svg><use href="#tann"/></svg></b><span class="dd dd-m"></span>
  <i class="grip g12"></i>
  <b class="ic"><svg><use href="#pink"/></svg></b><b class="ic"><svg><use href="#dark"/></svg></b>
  <i class="grip g7"></i>
  <b class="ic"><svg><use href="#help"/></svg></b>
  <i class="grip g9"></i>
  <b class="ic"><svg><use href="#clipdoc"/></svg></b><b class="ic"><svg><use href="#clipv"/></svg></b><b class="ic"><svg><use href="#clipv2"/></svg></b>
</div>

<div class="tb">
  <i class="grip first"></i>
  <b class="ic"><svg><use href="#edits"/></svg></b><b class="ic"><svg><use href="#pencil"/></svg></b><b class="ic"><svg><use href="#gsave"/></svg></b><b class="ic"><svg><use href="#gadd"/></svg></b><b class="ic"><svg><use href="#garc"/></svg></b><span class="dd dd-grey"></span>
  <b class="ic ml3"><svg><use href="#gmove"/></svg></b><b class="ic"><svg><use href="#gnode"/></svg></b><b class="ic"><svg><use href="#trash"/></svg></b><b class="ic"><svg><use href="#cut"/></svg></b><b class="ic"><svg><use href="#copy"/></svg></b><b class="ic"><svg><use href="#paste"/></svg></b>
  <i class="grip g7"></i>
  <b class="ic"><svg><use href="#tri"/></svg></b><b class="ic"><svg><use href="#magnet"/></svg></b><b class="ic"><svg><use href="#undo"/></svg></b><b class="ic"><svg><use href="#redo"/></svg></b><b class="ic"><svg><use href="#ring"/></svg></b><b class="ic"><svg><use href="#part"/></svg></b><b class="ic"><svg><use href="#bg1"/></svg></b><b class="ic"><svg><use href="#bg2"/></svg></b><b class="ic"><svg><use href="#bg1"/></svg></b><b class="ic"><svg><use href="#bx1"/></svg></b><b class="ic"><svg><use href="#bx2"/></svg></b><b class="ic"><svg><use href="#rsh"/></svg></b><b class="ic"><svg><use href="#simp"/></svg></b><b class="ic"><svg><use href="#sc1"/></svg></b><b class="ic"><svg><use href="#sc1"/></svg></b><b class="ic"><svg><use href="#mrg"/></svg></b><b class="ic"><svg><use href="#off"/></svg></b><b class="ic"><svg><use href="#rot"/></svg></b><span class="dd dd-grey"></span>
  <i class="grip g10"></i>
  <b class="ic"><svg><use href="#py"/></svg></b><b class="ic"><svg><use href="#gcirc"/></svg></b><b class="ic"><svg><use href="#poly"/></svg></b><b class="ic"><svg><use href="#tbl"/></svg></b><b class="ic"><svg><use href="#bino"/></svg></b><b class="ic"><svg><use href="#person"/></svg></b><b class="ic"><svg><use href="#leaf"/></svg></b><b class="ic"><svg><use href="#numv"/></svg></b>
  <b class="ic ml6 more">»</b>
  <i class="grip g0"></i>
  <b class="ic"><svg><use href="#grid4"/></svg></b>
  <i class="grip"></i>
  <b class="ic"><svg><use href="#globe3"/></svg></b>
  <i class="grip"></i>
  <b class="ic"><svg><use href="#tmap"/></svg></b>
  <i class="grip"></i>
  <b class="ic"><svg><use href="#cutm"/></svg></b>
  <i class="grip"></i>
  <b class="ic"><svg><use href="#wpt"/></svg></b>
  <i class="grip"></i>
  <span class="filter"><span class="filter-in"><svg class="back"><use href="#back"/></svg></span><span class="filter-dd"><span class="dd dd-s"></span></span></span>
  <b class="ic"><svg><use href="#bigmag"/></svg></b>
  <i class="grip"></i>
  <b class="ic ml1"><svg><use href="#redpoly"/></svg></b>
</div>

<main class="main">
  <aside class="side">
    <i class="hgrip"></i>
    <div class="si"><svg><use href="#lv"/></svg></div>
    <div class="si"><svg><use href="#lr"/></svg></div>
    <div class="si"><svg><use href="#lf"/></svg></div>
    <div class="si"><svg><use href="#lp"/></svg><span class="dd"></span></div>
    <div class="si"><svg><use href="#lw"/></svg><span class="dd"></span></div>
    <div class="si"><svg><use href="#lg"/></svg></div>
    <div class="si"><svg><use href="#lwv"/></svg><span class="dd"></span></div>
    <div class="si"><svg><use href="#lc"/></svg></div>
    <div class="si"><svg><use href="#ls"/></svg></div>
    <div class="si"><svg><use href="#lnew"/></svg><span class="dd"></span></div>
    <div class="si si3"><svg><use href="#lwc"/></svg></div>
    <div class="si si3"><svg><use href="#lnf"/></svg></div>
    <div class="si si3"><svg><use href="#lwd"/></svg></div>
    <i class="hgrip hgrip2"></i>
    <div class="si si2"><svg><use href="#aim"/></svg></div>
    <div class="si si2"><svg><use href="#comp"/></svg></div>
    <div class="si si2"><svg><use href="#tops"/></svg></div>
    <div class="si si2"><svg><use href="#topc"/></svg></div>
    <div class="si si2"><svg><use href="#tref"/></svg></div>
    <div class="si si2"><svg><use href="#tpic"/></svg></div>
    <div class="si si2"><svg><use href="#tedit"/></svg></div>
  </aside>

  <section class="panel">
    <div class="ph">
      <i class="pgrip"></i><span class="ph-t">Layers Panel</span><i class="pgrip"></i>
      <span class="pbtn"><svg viewBox="0 0 12 12"><path d="M1.500 4.500h6v6h-6zM4 4V1.500h6.500V8H8" fill="none" stroke="#000"/></svg></span>
      <span class="pbtn"><svg viewBox="0 0 12 12"><path d="M2 2l8 8M10 2l-8 8" stroke="#000" stroke-width="1.300"/></svg></span>
    </div>
    <div class="ptb">
      <svg><use href="#paint"/></svg><svg><use href="#addg"/></svg><svg><use href="#eye"/></svg><svg><use href="#funnel"/></svg><svg><use href="#epsg"/></svg><span class="dd dd-p"></span><svg><use href="#expand"/></svg><svg><use href="#collapse"/></svg><svg><use href="#rem"/></svg>
    </div>
    <div class="tree">
      <i class="vl vl-a"></i><i class="vl vl-b"></i>
      <div class="row row-head">
        <span class="exp"></span><span class="ck"><svg><use href="#x"/></svg></span><svg class="vicon"><use href="#V"/></svg><span class="t-head">Diviso [7]</span>
      </div>
      <div class="row row-c"><span class="ck"><svg><use href="#x"/></svg></span><span class="sw c0"></span><span class="t-c">0 [1]</span></div>
      <div class="row row-c"><span class="ck"><svg><use href="#x"/></svg></span><span class="sw c1"></span><span class="t-c">1 [1]</span></div>
      <div class="row row-c"><span class="ck"><svg><use href="#x"/></svg></span><span class="sw c2"></span><span class="t-c">2 [1]</span></div>
      <div class="row row-c"><span class="ck"><svg><use href="#x"/></svg></span><span class="sw c3"></span><span class="t-c">3 [1]</span></div>
      <div class="row row-c"><span class="ck"><svg><use href="#x"/></svg></span><span class="sw c4"></span><span class="t-c">4 [1]</span></div>
      <div class="row row-c"><span class="ck"><svg><use href="#x"/></svg></span><span class="sw c5"></span><span class="t-c">5 [1]</span></div>
      <div class="row row-c"><span class="ck"><svg><use href="#x"/></svg></span><span class="sw c6"></span><span class="t-c">6 [1]</span></div>
      <div class="row row-t"><span class="ck"></span><span class="ln l-e"></span><span>Esploso [6]</span></div>
      <div class="row row-t"><span class="ck"></span><span class="ln l-s"></span><span>vl_segment</span></div>
      <div class="row row-t"><span class="ck"></span><span class="dot d-r"></span><span>vl_closestpoint</span></div>
      <div class="row row-t"><span class="ck"></span><span class="ln l-l"></span><span>line</span></div>
      <div class="row row-t"><span class="ck"><svg><use href="#x"/></svg></span><span class="dot d-g"></span><span>points</span></div>
    </div>
    <div class="tabs">
      <span class="tab tab-b">Browser Panel</span><span class="tab tab-a">Layers Panel</span>
    </div>
  </section>

  <div class="split"><i></i></div>

  <section class="map">
    <svg class="canvas" viewBox="398 147 1522 893">
      <g class="lines">
        <polyline class="s-ol" points="877,717 870,763 882,786 889,794 897,797 910,809 914,822 911,867 897,910 888,925 875,967 872,987 873,1018 889,1013 902,1002 922,977 928,960 934,941 940,933 963,924 982,929"/>
        <polyline class="s-cy" points="1007,389 1024,392 1033,401 1016,513 1020,567 1017,593 1013,607 996,622 932,637 908,637 895,641 888,652 883,670 877,717"/>
        <polyline class="s-bl" points="982,929 1002,937 1018,944 1030,944 1107,916 1137,887 1157,863 1190,820"/>
        <polyline class="s-mg" points="1190,820 1199,807 1274,732 1278,720 1309,627"/>
        <polyline class="s-gr" points="1309,627 1313,620 1302,600 1320,591 1336,569 1333,563 1336,493 1337,490 1358,467 1408,427 1456,379 1463,363 1433,342"/>
        <polyline class="s-rd" points="1433,342 1402,321 1361,317 1330,324 1315,331 1303,342 1297,347 1263,344 1248,337 1243,296 1247,294 1261,275 1283,224"/>
      </g>
      <g class="pts">
        <circle cx="1005" cy="392" r="5.500"/><circle cx="1316" cy="627" r="5.500"/><circle cx="1458" cy="309" r="5.500"/><circle cx="969" cy="968" r="5.500"/><circle cx="864" cy="713" r="5.500"/><circle cx="1179" cy="810" r="5.500"/>
      </g>
      <g class="lines">
        <polyline class="s-bk" points="1102,172 1073,167 1040,166 1018,171 1017,210 983,251 957,298 930,335 900,357 853,376 872,385 938,402 957,399 972,392 1007,388"/>
      </g>
      <g class="pl">
        <text x="1010" y="409">1</text><text x="1321" y="623">2</text><text x="1463" y="305">3</text><text x="973" y="963">4</text><text x="868" y="710">5</text><text x="1183" y="805">6</text>
      </g>
      <g class="vl-t">
        <text x="878" y="357">7568.08</text><text x="982" y="592">6438.09</text><text x="1262" y="353">4731.04</text><text x="1349" y="452">5366.92</text><text x="1242" y="727">3383.12</text><text x="1108" y="884">3772.68</text><text x="837" y="985">7080.59</text>
      </g>
    </svg>
  </section>
</main>

<footer class="status">
  <span class="st st-co">Coordinata</span>
  <span class="field f-co">951598,4172528</span>
  <svg class="s-ren"><use href="#ren"/></svg>
  <span class="st st-sc">Scala</span>
  <span class="field f-sc">1:82.282<span class="f-btn"><span class="dd dd-s"></span></span></span>
  <svg class="s-lock"><use href="#lock"/></svg>
  <span class="st st-ma">Magnifier</span>
  <span class="field f-sp f-ma">100%<span class="spin"><i class="up"></i><i class="down"></i></span></span>
  <span class="st st-ro">Rotazione</span>
  <span class="field f-sp f-ro">0,0<span class="spin"><i class="up"></i><i class="down"></i></span></span>
  <span class="ck ck-s"><svg><use href="#x"/></svg></span>
  <span class="st st-vi">Visualizza</span>
  <svg class="s-proj"><use href="#proj"/></svg>
  <span class="st st-ep">EPSG:23032</span>
  <svg class="s-msg"><use href="#msg"/></svg>
</footer>
<div class="taskbar"></div>
</body>
</html>
```
FILE: styles.css
```css
* { box-sizing: border-box; }
html, body { margin: 0; height: 100%; }
body {
  width: 1920px; height: 1080px; overflow: hidden;
  display: flex; flex-direction: column;
  background: #efefef; color: #000;
  font: 15.8px/1.2 "Open Sans", "Noto Sans", sans-serif;
}
.defs { display: none; }
.svgt { font: 700 7px "Liberation Sans", sans-serif; fill: #999; text-anchor: middle; }
.svge { font: 24px "Liberation Serif", serif; fill: #5a2a80; }
.svge2 { font: 20px "Liberation Serif", serif; fill: #6a4a90; }
.svgT { font: 700 13px "Liberation Serif", serif; fill: #333; text-anchor: middle; }
.svgq { font: 16px "Liberation Sans", sans-serif; fill: #fff; text-anchor: middle; }
.svgn { font: 700 6.500px "Liberation Sans", sans-serif; fill: #111; text-anchor: middle; }
.svgs { font: 6px "Liberation Sans", sans-serif; fill: #123; text-anchor: middle; }

/* title bar */
.title { height: 35px; flex: none; background: #fff; display: flex; align-items: center; padding-left: 4px; }
.logo { width: 20px; height: 26px; }
.title-text { margin-left: 7px; font-size: 17.700px; }
.win { margin-left: auto; display: flex; align-items: center; gap: 54px; padding-right: 29px; }
.win-i { width: 16px; height: 16px; }

/* menu */
.menu { height: 31px; flex: none; display: flex; align-items: center; padding-left: 4px; border-bottom: 1px solid #c6c6c6; font-size: 15.600px; }
.mi { padding: 1px 7.500px; border: 1px solid transparent; white-space: nowrap; }
.mi-on { border-color: #b0b0b0; background: #f6f6f6; padding: 1px 5px; height: 25px; min-width: 76px; margin-right: 1px; border-radius: 1px; }

/* toolbars */
.tb { height: 39px; flex: none; display: flex; align-items: center; padding-left: 6px; border-bottom: 2px solid #c8c8c8; }
.ic { width: 35px; height: 34px; flex: none; display: flex; align-items: center; justify-content: center; font-weight: 400; }
.ic svg { width: 26px; height: 26px; display: block; }
.ic-on { width: 34px; background: #dcdcdc; border: 1px solid #9a9a9a; border-radius: 3px; margin-left: 3px; }
.grip { width: 6px; height: 30px; margin-left: 8px; flex: none; display: block;
  background: repeating-linear-gradient(0deg, #cfcfcf 0 2px, #fbfbfb 2px 4px); }
.grip.first, .grip.g0 { margin-left: 0; }
.grip.g7 { margin-left: 7px; } .grip.g9 { margin-left: 9px; } .grip.g10 { margin-left: 10px; } .grip.g12 { margin-left: 12px; }
.ml1 { margin-left: 1px; } .ml3 { margin-left: 3px; } .ml4 { margin-left: 4px; } .ml6 { margin-left: 6px; }
.dd { width: 16px; height: 8px; flex: none; display: block; position: relative; }
.dd::after { content: ""; position: absolute; left: 50%; top: 0; margin-left: -6px; border: 6px solid transparent; border-top: 7px solid #000; border-bottom: 0; }
.dd-grey::after { border-top-color: #a0a0a0; }
.dd-n { width: 10px; } .dd-m { width: 14px; }
.dd-p { width: 14px; }
.dd-on { width: 16px; height: 34px; margin-left: 1px; flex: none; display: flex; align-items: center; background: #dcdcdc; border: 1px solid #aaa; border-radius: 3px; }
.dd-on .dd { width: 14px; }
.dd-s { width: 10px; height: 5px; }
.dd-s::after { margin-left: -3.5px; border-width: 4px 3.5px 0; border-top-color: #000; }
.more { font-size: 13px; font-weight: 700; }
.filter { width: 85px; height: 26px; margin-left: 1px; flex: none; display: flex; border: 1px solid #b4b4b4; border-radius: 3px; background: #fff; }
.filter-in { flex: 1; display: flex; align-items: center; justify-content: flex-end; padding-right: 14px; }
.back { width: 24px; height: 13px; }
.filter-dd { width: 16px; display: flex; align-items: center; justify-content: center; background: linear-gradient(#f4f4f4, #d8d8d8); border-left: 1px solid #c0c0c0; }

/* main */
.main { flex: 1; min-height: 0; display: flex; padding-top: 2px; }
.side { width: 59px; flex: none; border-right: 2px solid #c2c2c2; margin-top: 2px; padding-top: 2px; display: flex; flex-direction: column; }
.hgrip { display: block; height: 5px; margin: 0 4px; flex: none;
  background: repeating-linear-gradient(90deg, #cfcfcf 0 2px, #fbfbfb 2px 4px); }
.hgrip2 { margin-top: 8px; }
.si { height: 34px; flex: none; display: flex; align-items: center; padding-left: 7px; }
.si svg { width: 26px; height: 26px; display: block; }
.si .dd { margin-left: 3px; }
.si2 { padding-left: 16px; }
.si3 { padding-left: 14px; }

.panel { width: 331px; flex: none; display: flex; flex-direction: column; }
.ph { height: 24px; flex: none; display: flex; align-items: center; padding: 0 1px; font-size: 14px; }
.pgrip { flex: 1; height: 5px; background: repeating-linear-gradient(90deg, #cfcfcf 0 2px, #fbfbfb 2px 4px); }
.ph-t { padding: 0 10px; }
.pbtn { width: 16px; height: 16px; margin-left: 1px; display: flex; align-items: center; justify-content: center; border: 1px solid #aaa; border-radius: 3px; background: #f6f6f6; }
.pgrip + .pbtn { margin-left: 4px; }
.pbtn svg { width: 12px; height: 12px; }
.ptb { height: 32px; flex: none; display: flex; align-items: center; padding: 0 0 2px 6px; gap: 7px; }
.ptb svg { width: 20px; height: 20px; flex: none; display: block; }
.ptb .dd-p { margin: -6px -3px 0 -3px; }
.tree { flex: 1; min-height: 0; position: relative; background: #fff; border: 1px solid #c4c4c4; border-bottom: 2px solid #bdbdbd; border-radius: 2px 2px 0 0; }
.vl { position: absolute; border-left: 1px dotted #8a8a8a; }
.vl-a { left: 10px; top: 28px; height: 253px; }
.vl-b { left: 30px; top: 24px; height: 145px; }
.row { height: 22px; display: flex; align-items: center; white-space: nowrap; position: relative; }
.row-head { height: 25px; background: #eeeeee; }
.row-c { padding-left: 43px; }
.row-t { padding-left: 23px; }
.row-c::before, .row-t::before { content: ""; position: absolute; top: 50%; border-top: 1px dotted #8a8a8a; }
.row-c::before { left: 30px; width: 12px; }
.row-t::before { left: 10px; width: 12px; }
.exp { width: 8px; height: 8px; margin-left: 6px; flex: none; background: linear-gradient(#666, #666) center/4px 1px no-repeat #fff; border: 1px solid #999; position: relative; }
.ck { width: 18px; height: 18px; flex: none; background: #fff; border: 1px solid #b4b4b4; display: flex; align-items: center; justify-content: center; }
.ck svg { width: 18px; height: 18px; display: block; flex: none; }
.row-head .ck { margin-left: 9px; }
.vicon { width: 24px; height: 24px; margin-left: 6px; flex: none; }
.t-head { margin-left: 6px; text-decoration: underline; }
.sw { width: 18px; height: 4px; margin: 0 6px 0 7px; flex: none; }
.c0 { background: #8a8a4a; } .c1 { background: #2ae0c0; } .c2 { background: #6aaeee; } .c3 { background: #e030d8; } .c4 { background: #e6174a; } .c5 { background: #a5c844; } .c6 { background: #1a1a1a; }
.ln { width: 18px; height: 2px; margin: 0 6px 0 7px; flex: none; }
.l-e { background: #c8603a; } .l-s { background: #8a72c8; } .l-l { background: #222; }
.dot { width: 12px; height: 12px; margin: 0 10px 0 11px; border-radius: 50%; flex: none; border: 1px solid #333; }
.d-r { background: #ee0000; } .d-g { background: #10e010; }
.tabs { height: 29px; flex: none; display: flex; align-items: flex-start; padding-left: 1px; font-size: 15.500px; }
.tab { display: flex; align-items: center; justify-content: center; }
.tab-b { width: 141px; height: 26px; margin-top: 1px; background: linear-gradient(#fbfbfb, #dcdcdc); border: 1px solid #c4c4c4; border-radius: 2px 2px 0 0; }
.tab-a { width: 126px; height: 29px; padding-top: 2px; background: #efefef; border: 1px solid #c4c4c4; border-top: 0; border-radius: 0 0 2px 2px; }
.split { width: 7px; flex: none; display: flex; align-items: center; padding-left: 1px; }
.split i { width: 2px; height: 290px; background: repeating-linear-gradient(0deg, #d0d0d0 0 2px, #f8f8f8 2px 4px); }
.map { flex: 1; min-width: 0; background: #fff; border: 1px solid #c4c4c4; border-right: 0; }
.canvas { width: 100%; height: 100%; display: block; }
.lines polyline { fill: none; stroke-width: 4; stroke-linejoin: round; }
.s-ol { stroke: #8a8a4a; } .s-cy { stroke: #2ae0c0; } .s-bl { stroke: #6aaeee; } .s-mg { stroke: #e030d8; }
.s-gr { stroke: #a5c844; } .s-rd { stroke: #e6174a; } .s-bk { stroke: #1a1a1a; }
.pts circle { fill: #10e810; stroke: #111; stroke-width: 1; }
.pl text { font: 16px "Open Sans", sans-serif; fill: #111; text-anchor: middle; }
.vl-t text { font: 21px "Open Sans", sans-serif; fill: #1c0050; stroke: #6a22b8; stroke-width: 1.600px; paint-order: stroke; letter-spacing: -.7px; }

/* status */
.status { height: 37px; flex: none; display: flex; align-items: center; padding: 2px 0 0 692px; }
.st { white-space: nowrap; flex: none; }
.st-co { width: 81px; }
.field { height: 27px; flex: none; display: flex; align-items: center; background: #fff; border: 1px solid #c4c4c4; border-radius: 3px; white-space: nowrap; }
.f-co { width: 185px; margin-left: 5px; justify-content: center; }
.s-ren { width: 24px; height: 26px; margin-left: 3px; flex: none; }
.st-sc { width: 39px; margin-left: 17px; }
.f-sc { width: 114px; margin-left: 4px; padding-left: 2px; position: relative; }
.f-btn { margin-left: auto; width: 16px; height: 100%; display: flex; align-items: center; justify-content: center; background: linear-gradient(#f6f6f6, #d8d8d8); border-left: 1px solid #c4c4c4; }
.s-lock { width: 18px; height: 28px; margin-left: 9px; flex: none; }
.st-ma { width: 72px; margin-left: 17px; }
.f-sp { width: 118px; height: 32px; padding-left: 2px; }
.f-ma { margin-left: 3px; }
.st-ro { width: 74px; margin-left: 10px; }
.f-ro { margin-left: 10px; }
.spin { margin-left: auto; width: 16px; height: 100%; display: flex; flex-direction: column; border-left: 1px solid #c4c4c4; }
.spin i { flex: 1; display: flex; align-items: center; justify-content: center; background: linear-gradient(#f8f8f8, #e0e0e0); }
.spin .down { border-top: 1px solid #c4c4c4; }
.spin i::after { content: ""; border: 3.500px solid transparent; }
.spin .up::after { border-bottom: 5px solid #000; border-top: 0; }
.spin .down::after { border-top: 5px solid #000; border-bottom: 0; }
.ck-s { margin-left: 8px; }
.st-vi { width: 70px; margin-left: 9px; }
.s-proj { width: 18px; height: 18px; margin-left: 21px; flex: none; }
.st-ep { width: 90px; margin-left: 6px; }
.s-msg { width: 22px; height: 26px; margin-left: 27px; flex: none; }
.taskbar { height: 2px; flex: none; background: #1e1e1e; }
```
